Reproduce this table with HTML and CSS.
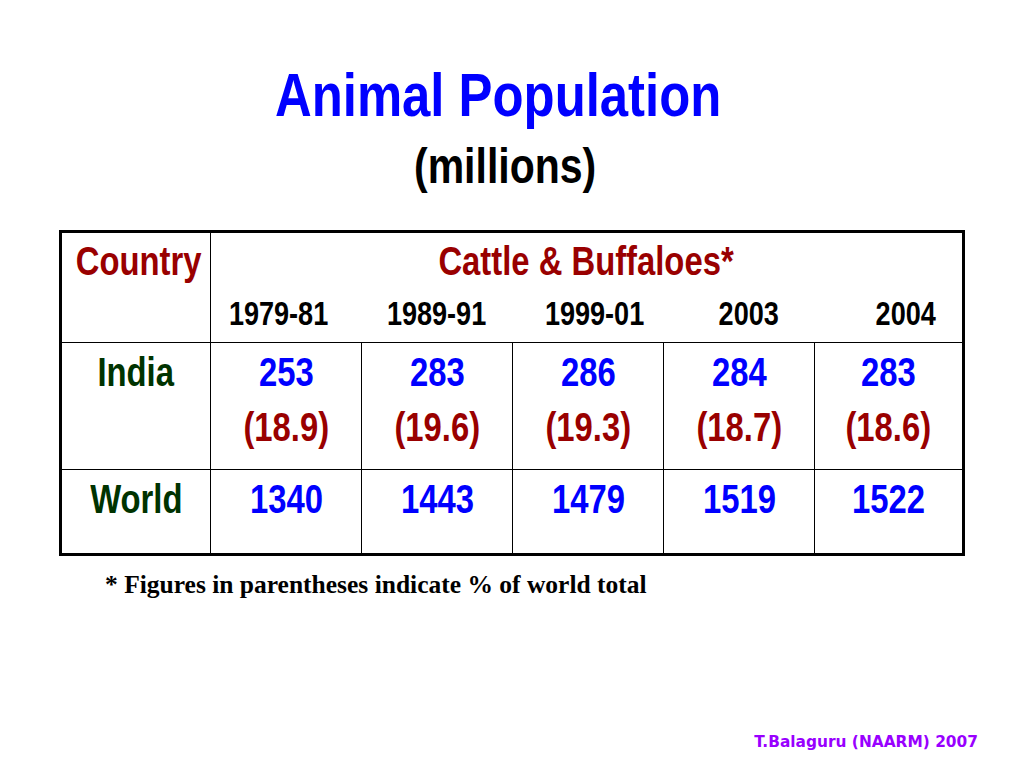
FILE: index.html
```html
<!DOCTYPE html>
<html lang="en">
<head>
<meta charset="utf-8">
<title>Animal Population</title>
<link rel="stylesheet" href="styles.css">
</head>
<body>
<div class="slide">
  <h1 class="title"><span class="sq">Animal Population</span></h1>
  <div class="subtitle"><span class="sq">(millions)</span></div>

  <div class="table">
    <div class="cell head-country"><span class="sq">Country</span></div>
    <div class="cell head-group">
      <div class="group-title"><span class="sq">Cattle &amp; Buffaloes*</span></div>
      <div class="years">
        <span class="year year-left"><span class="sq">1979-81</span></span>
        <span class="year"><span class="sq">1989-91</span></span>
        <span class="year year-r1"><span class="sq">1999-01</span></span>
        <span class="year year-r2"><span class="sq">2003</span></span>
        <span class="year year-r3"><span class="sq">2004</span></span>
      </div>
    </div>

    <div class="cell row-india country"><span class="sq">India</span></div>
    <div class="cell row-india"><div class="num"><span class="sq">253</span></div><div class="pct"><span class="sq">(18.9)</span></div></div>
    <div class="cell row-india"><div class="num"><span class="sq">283</span></div><div class="pct"><span class="sq">(19.6)</span></div></div>
    <div class="cell row-india"><div class="num"><span class="sq">286</span></div><div class="pct"><span class="sq">(19.3)</span></div></div>
    <div class="cell row-india"><div class="num"><span class="sq">284</span></div><div class="pct"><span class="sq">(18.7)</span></div></div>
    <div class="cell row-india"><div class="num"><span class="sq">283</span></div><div class="pct"><span class="sq">(18.6)</span></div></div>

    <div class="cell row-world country"><span class="sq">World</span></div>
    <div class="cell row-world"><div class="num"><span class="sq">1340</span></div></div>
    <div class="cell row-world"><div class="num"><span class="sq">1443</span></div></div>
    <div class="cell row-world"><div class="num"><span class="sq">1479</span></div></div>
    <div class="cell row-world"><div class="num"><span class="sq">1519</span></div></div>
    <div class="cell row-world"><div class="num"><span class="sq">1522</span></div></div>
  </div>

  <p class="note">* Figures in parentheses indicate % of world total</p>

  <div class="footer">T.Balaguru (NAARM) 2007</div>
</div>
</body>
</html>
```

FILE: styles.css
```css
html, body {
  margin: 0;
  padding: 0;
  background: #ffffff;
}

.slide {
  width: 1024px;
  height: 768px;
  box-sizing: border-box;
  display: flex;
  flex-direction: column;
  font-family: "Liberation Sans", Arial, sans-serif;
  font-weight: bold;
}

/* Arial Narrow look: Liberation Sans squeezed horizontally */
.sq {
  display: inline-block;
  white-space: nowrap;
  transform: scaleX(0.82);
  transform-origin: center;
}

.title {
  margin: 64px 0 0 0;
  padding-right: 28px;
  font-size: 62px;
  line-height: 62px;
  font-weight: bold;
  color: #0000ff;
  text-align: center;
}

.subtitle {
  margin-top: 15px;
  padding-right: 14px;
  font-size: 50px;
  line-height: 50px;
  color: #000000;
  text-align: center;
}

.table {
  margin: 39px 0 0 59px;
  width: 906px;
  box-sizing: border-box;
  border: 3px solid #000000;
  background: #000000;
  display: grid;
  grid-template-columns: 148px 150px 150px 150px 150px 147px;
  grid-template-rows: 109px 126px 83px;
  gap: 1px;
}

.cell {
  background: #ffffff;
  text-align: center;
  font-size: 40px;
  white-space: nowrap;
  overflow: visible;
}

.head-country {
  padding-top: 8px;
  line-height: 40px;
  color: #990000;
}

.head-group {
  grid-column: 2 / span 5;
  padding-top: 8px;
}

.group-title {
  line-height: 40px;
  color: #990000;
}

.years {
  margin-top: 16px;
  display: grid;
  grid-template-columns: 150px 150px 150px 150px 147px;
  column-gap: 1px;
  font-size: 33px;
  line-height: 33px;
  color: #000000;
}

.year {
  text-align: center;
}

.year-left { padding-right: 14px; }
.year-r1 { padding-left: 14px; }
.year-r2 { padding-left: 20px; }
.year-r3 { padding-left: 34px; }

.row-india,
.row-world {
  padding-top: 2px;
  line-height: 55px;
}

.country {
  color: #003300;
}

.num {
  color: #0000ff;
}

.pct {
  color: #990000;
}

.note {
  margin: 16px 0 0 0;
  padding-left: 105px;
  font-family: "Liberation Serif", "Times New Roman", serif;
  font-weight: bold;
  font-size: 25.5px;
  line-height: 25px;
  color: #000000;
}

.footer {
  margin-top: auto;
  padding: 0 46px 18px 0;
  text-align: right;
  font-family: "DejaVu Sans", Verdana, sans-serif;
  font-weight: bold;
  font-size: 15.4px;
  line-height: 15px;
  color: #9900ff;
}
```
